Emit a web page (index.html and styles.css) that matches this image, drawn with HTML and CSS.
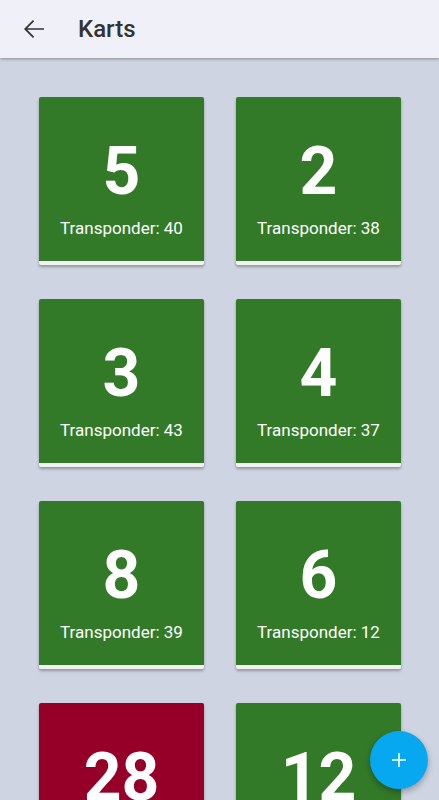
FILE: index.html
```html
<!DOCTYPE html>
<html>
<head>
<meta charset="utf-8">
<link rel="stylesheet" href="styles.css">
</head>
<body>
<header class="appbar">
  <svg class="back" width="30" height="30" viewBox="0 0 24 24"><path d="M20 11.3H6.6l5.5-5.5-0.95-0.95L4 12l7.15 7.15 0.95-0.95-5.5-5.5H20z" fill="#333"/></svg>
  <h1 class="title">Karts</h1>
</header>
<main class="grid">
  <div class="card"><div class="num">5</div><div class="tp">Transponder: 40</div></div>
  <div class="card"><div class="num">2</div><div class="tp">Transponder: 38</div></div>
  <div class="card"><div class="num">3</div><div class="tp">Transponder: 43</div></div>
  <div class="card"><div class="num">4</div><div class="tp">Transponder: 37</div></div>
  <div class="card"><div class="num">8</div><div class="tp">Transponder: 39</div></div>
  <div class="card"><div class="num">6</div><div class="tp">Transponder: 12</div></div>
  <div class="card red"><div class="num">28</div><div class="tp">Transponder: 1</div></div>
  <div class="card"><div class="num">12</div><div class="tp">Transponder: 2</div></div>
</main>
<button class="fab"><svg width="24" height="24" viewBox="0 0 24 24"><path d="M19 12.8h-6.2V19h-1.6v-6.2H5v-1.6h6.2V5h1.6v6.2H19z" fill="#fff"/></svg></button>
</body>
</html>
```
FILE: styles.css
```css
html, body { margin: 0; padding: 0; }
body {
  width: 439px; height: 800px; overflow: hidden;
  background: #ced4e1;
  font-family: Roboto, "Noto Sans", sans-serif;
}
.appbar {
  height: 58px;
  background: #eff0f8;
  display: flex; align-items: center;
  box-shadow: 0 1px 3px rgba(0,0,0,0.35);
  position: relative; z-index: 2;
}
.back { margin-left: 19px; width: 30px; height: 30px; }
.title {
  margin: 0 0 0 29px;
  font-size: 24px; font-weight: 500; color: #333;
}
.grid {
  display: grid;
  grid-template-columns: 165px 165px;
  column-gap: 32px; row-gap: 34px;
  padding: 39px 0 0 39px;
  height: 703px; overflow: hidden;
}
.card {
  height: 164px;
  background: #327a28;
  border-bottom: 4px solid #f2f2f5;
  border-radius: 2px;
  box-shadow: 0 2px 3px rgba(0,0,0,0.3);
  color: #fff;
  display: flex; flex-direction: column; align-items: center;
}
.card.red { background: #960028; }
.num {
  font-size: 66px; font-weight: 700; line-height: 1;
  margin-top: 42px;
}
.tp {
  font-size: 17px; line-height: 1;
  margin-top: 15px;
}
.fab {
  position: fixed; left: 370px; top: 731px;
  width: 58px; height: 58px; border-radius: 50%;
  border: none; background: #07a8ef;
  box-shadow: 0 3px 6px rgba(0,0,0,0.3);
  display: flex; align-items: center; justify-content: center;
  padding: 0;
}
```
